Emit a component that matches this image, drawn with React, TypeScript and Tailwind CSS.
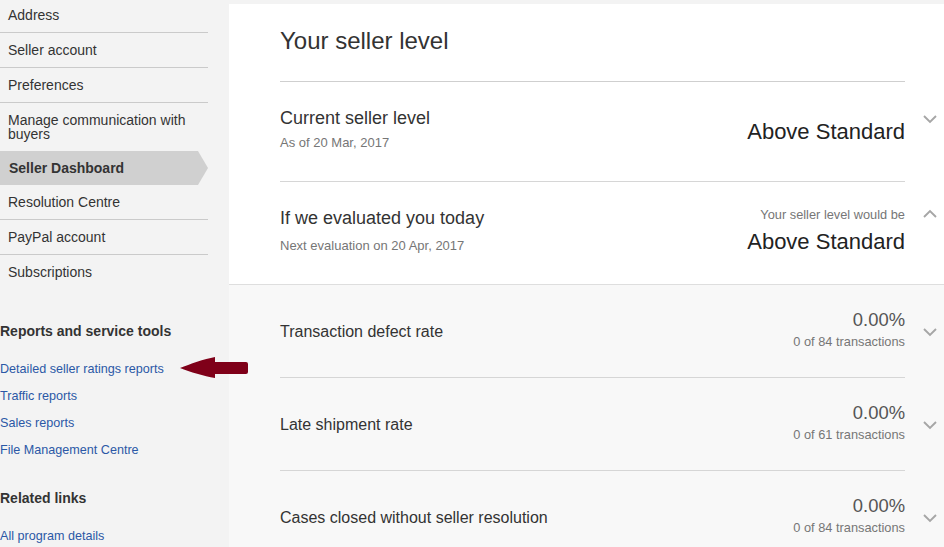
import React from 'react';

type Metric = { label: string; value: string; detail: string };

const menu = [
  { label: 'Address' },
  { label: 'Seller account' },
  { label: 'Preferences' },
  { label: 'Manage communication with buyers', noBorder: true },
  { label: 'Seller Dashboard', active: true },
  { label: 'Resolution Centre' },
  { label: 'PayPal account' },
  { label: 'Subscriptions', noBorder: true },
];

const reportLinks = [
  'Detailed seller ratings reports',
  'Traffic reports',
  'Sales reports',
  'File Management Centre',
];

const metrics: Metric[] = [
  { label: 'Transaction defect rate', value: '0.00%', detail: '0 of 84 transactions' },
  { label: 'Late shipment rate', value: '0.00%', detail: '0 of 61 transactions' },
  { label: 'Cases closed without seller resolution', value: '0.00%', detail: '0 of 84 transactions' },
];

function Chevron({ up = false }: { up?: boolean }) {
  return (
    <svg width="14" height="14" viewBox="0 0 14 14" fill="none" stroke="#a6a6a6" strokeWidth="1.9">
      <polyline points={up ? '1,10 7,4 13,10' : '1,4 7,10 13,4'} />
    </svg>
  );
}

function Sidebar() {
  return (
    <aside className="w-[229px] shrink-0 text-[#333]">
      <ul className="-mt-[2px] w-[208px]">
        {menu.map((item) =>
          item.active ? (
            <li
              key={item.label}
              className="bg-[#d0d0d0] px-[9px] py-[10px] text-[14px] leading-[14px] font-bold [clip-path:polygon(0_0,198px_0,208px_50%,198px_100%,0_100%)]"
            >
              {item.label}
            </li>
          ) : (
            <li
              key={item.label}
              className={`px-[8px] py-[10px] text-[14px] leading-[14px] ${item.noBorder ? '' : 'border-b border-[#cacaca]'}`}
            >
              {item.label}
            </li>
          )
        )}
      </ul>

      <h3 className="mt-[32px] text-[14px] leading-[20px] font-bold text-[#333]">Reports and service tools</h3>
      <ul className="mt-[15px]">
        {reportLinks.map((l) => (
          <li key={l} className="text-[12.6px] leading-[27px] text-[#2b58a6]">
            {l}
          </li>
        ))}
      </ul>

      <h3 className="mt-[24px] text-[14px] leading-[20px] font-bold text-[#333]">Related links</h3>
      <p className="mt-[15px] text-[12.6px] leading-[27px] text-[#2b58a6]">All program details</p>
    </aside>
  );
}

export default function App() {
  return (
    <div className="relative flex w-[944px] h-[547px] overflow-hidden bg-[#f3f3f3] font-['Liberation_Sans',Arial,sans-serif]">
      <Sidebar />

      <main className="flex-1 flex flex-col pt-[4px]">
        {/* seller level card */}
        <section className="bg-white pl-[51px]">
          <div className="flex">
            <div className="flex-1 h-[78px] border-b border-[#cfcfcf] pt-[23px]">
              <h1 className="text-[24px] leading-[28px] text-[#333]">Your seller level</h1>
            </div>
            <div className="w-[39px]" />
          </div>

          <div className="flex">
            <div className="flex-1 h-[100px] border-b border-[#d6d6d6] flex justify-between">
              <div className="pt-[25px]">
                <div className="text-[18px] leading-[22px] text-[#333]">Current seller level</div>
                <div className="mt-[5px] text-[13px] leading-[18px] text-[#767676]">As of 20 Mar, 2017</div>
              </div>
              <div className="pt-[37px] text-[22px] leading-[26px] text-[#222]">Above Standard</div>
            </div>
            <div className="w-[39px] pt-[30px] pl-[18px]">
              <Chevron />
            </div>
          </div>

          <div className="flex">
            <div className="flex-1 h-[102px] flex justify-between">
              <div className="pt-[25px]">
                <div className="text-[18px] leading-[22px] text-[#333]">If we evaluated you today</div>
                <div className="mt-[8px] text-[13px] leading-[18px] text-[#767676]">Next evaluation on 20 Apr, 2017</div>
              </div>
              <div className="pt-[25px] text-right">
                <div className="text-[12.8px] leading-[16px] text-[#767676]">Your seller level would be</div>
                <div className="mt-[6px] text-[22px] leading-[26px] text-[#222]">Above Standard</div>
              </div>
            </div>
            <div className="w-[39px] pt-[25px] pl-[18px]">
              <Chevron up />
            </div>
          </div>
        </section>

        {/* metrics */}
        <section className="flex-1 bg-[#f8f8f8] border-t border-[#dedede] pl-[51px]">
          {metrics.map((m) => (
            <div key={m.label} className="flex">
              <div className="flex-1 h-[93px] border-b border-[#d6d6d6] flex items-center justify-between">
                <span className="pt-[1px] text-[16px] leading-[20px] text-[#333]">{m.label}</span>
                <div className="mb-[2px] text-right">
                  <div className="text-[18.4px] leading-[22px] text-[#555]">{m.value}</div>
                  <div className="mt-[2px] text-[12.8px] leading-[18px] text-[#767676]">{m.detail}</div>
                </div>
              </div>
              <div className="w-[39px] pl-[18px] flex items-center">
                <Chevron />
              </div>
            </div>
          ))}
        </section>
      </main>

      {/* annotation arrow */}
      <svg className="absolute left-[180px] top-[357px]" width="69" height="22" viewBox="0 0 69 22">
        <path d="M0 11 C10 7 24 2 35 0 L35 5 L66 5 Q68 5 68 7 L68 15 Q68 17 66 17 L35 17 L35 21 C24 19 10 15 0 11 Z" fill="#7f0019" />
      </svg>
    </div>
  );
}
